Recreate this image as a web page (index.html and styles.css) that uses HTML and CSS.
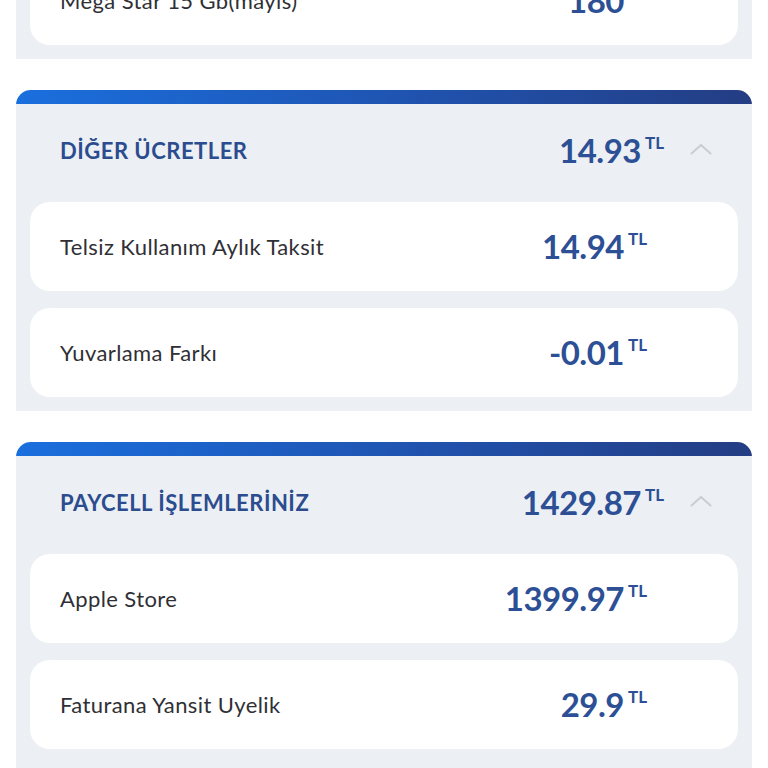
FILE: index.html
```html
<!DOCTYPE html>
<html lang="tr">
<head>
<meta charset="utf-8">
<link rel="stylesheet" href="styles.css">
</head>
<body>
<div class="page">
  <section class="panel panel-top">
    <div class="rows">
      <div class="row"><span class="label">Mega Star 15 Gb(mayıs)</span><span class="amount">180<span class="cur">TL</span></span></div>
    </div>
  </section>

  <section class="panel">
    <div class="bar"></div>
    <div class="head">
      <span class="title">DİĞER ÜCRETLER</span>
      <span class="amount head-amount">14.93<span class="cur">TL</span></span>
      <svg class="chev" width="22" height="12" viewBox="0 0 22 12"><path d="M1.5 10.5 L11 2 L20.5 10.5" fill="none" stroke="#c9cdd3" stroke-width="2" stroke-linecap="round" stroke-linejoin="round"/></svg>
    </div>
    <div class="rows">
      <div class="row"><span class="label">Telsiz Kullanım Aylık Taksit</span><span class="amount">14.94<span class="cur">TL</span></span></div>
      <div class="row"><span class="label">Yuvarlama Farkı</span><span class="amount">-0.01<span class="cur">TL</span></span></div>
    </div>
  </section>

  <section class="panel panel-last">
    <div class="bar"></div>
    <div class="head">
      <span class="title">PAYCELL İŞLEMLERİNİZ</span>
      <span class="amount head-amount">1429.87<span class="cur">TL</span></span>
      <svg class="chev" width="22" height="12" viewBox="0 0 22 12"><path d="M1.5 10.5 L11 2 L20.5 10.5" fill="none" stroke="#c9cdd3" stroke-width="2" stroke-linecap="round" stroke-linejoin="round"/></svg>
    </div>
    <div class="rows">
      <div class="row"><span class="label">Apple Store</span><span class="amount">1399.97<span class="cur">TL</span></span></div>
      <div class="row"><span class="label">Faturana Yansit Uyelik</span><span class="amount">29.9<span class="cur">TL</span></span></div>
    </div>
  </section>
</div>
</body>
</html>
```

FILE: styles.css
```css
* { box-sizing: border-box; }
html, body { margin: 0; padding: 0; background: #ffffff; }
body { font-family: Lato, "Noto Sans", "Liberation Sans", sans-serif; overflow: hidden; height: 768px; }

.page {
  display: flex;
  flex-direction: column;
  gap: 31px;
  padding: 0 16px;
}

.panel {
  background: #eceff3;
  display: flex;
  flex-direction: column;
  border-radius: 15px 15px 0 0;
  overflow: hidden;
}

.panel-top {
  margin-top: -64px;
  padding-top: 14px;
  border-radius: 0;
}

.panel-last { padding-bottom: 60px; }

.bar {
  height: 14px;
  background: linear-gradient(90deg, #1a6fde 0%, #1f55b3 50%, #243d83 100%);
}

.head {
  height: 92px;
  display: flex;
  align-items: center;
  padding: 0 40px 0 44px;
}

.title {
  flex: 1;
  font-weight: 700;
  font-size: 22px;
  color: #2b4c8e;
  letter-spacing: 0.5px;
}

.head-amount { margin-right: 26px; }

.chev { display: block; margin-top: -2px; }

.rows {
  display: flex;
  flex-direction: column;
  gap: 17px;
  padding: 6px 14px 14px;
}

.row {
  height: 89px;
  background: #ffffff;
  border-radius: 20px;
  display: flex;
  align-items: center;
  justify-content: space-between;
  padding: 0 91px 0 30px;
}

.label {
  font-size: 22px;
  color: #2f3035;
  letter-spacing: 0.4px;
}

.amount {
  display: flex;
  align-items: flex-start;
  font-weight: 700;
  font-size: 33px;
  line-height: 1;
  color: #2c4f95;
  letter-spacing: -0.5px;
}

.cur {
  font-size: 17px;
  font-weight: 700;
  margin-left: 4px;
  margin-top: 0;
  letter-spacing: 0;
}
```
